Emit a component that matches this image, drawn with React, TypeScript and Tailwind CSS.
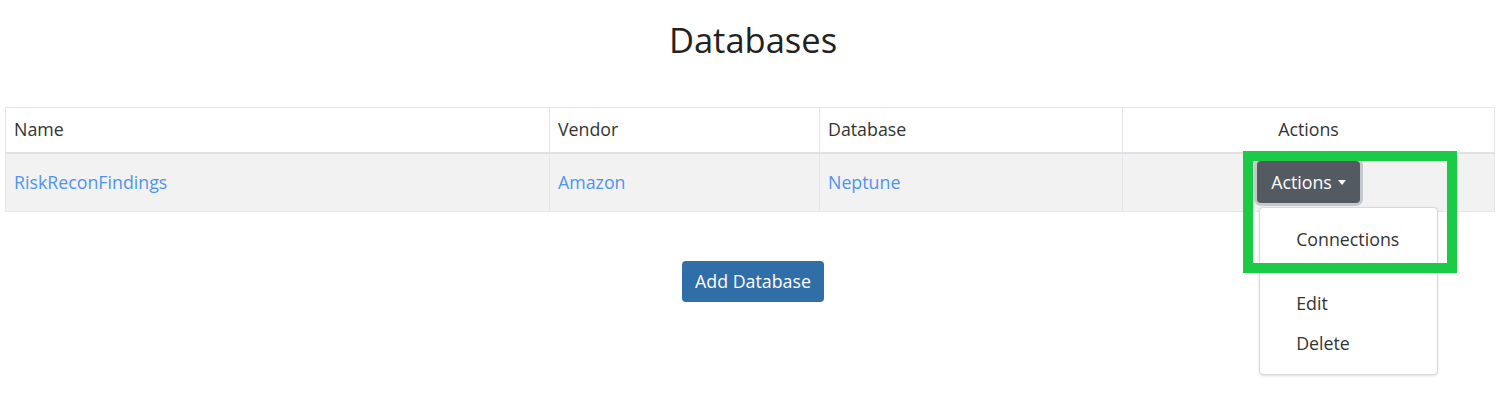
import { useState } from 'react';

const rows = [{ name: 'RiskReconFindings', vendor: 'Amazon', database: 'Neptune' }];

export default function App() {
  const [open] = useState(true);

  return (
    <div className="min-h-[412px] bg-white text-[#333] font-['Open_Sans',sans-serif]">
      <h1 className="pt-[17px] text-center text-[34.5px] leading-[46px] text-[#222]">Databases</h1>

      <div className="ml-[5px] mt-[44px] w-[1490px]">
        <table className="w-full border-collapse text-[17.8px]">
          <thead>
            <tr className="h-[45px] border-b-2 border-[#dee2e6]">
              <th className="w-[544px] border border-[#e4e6e9] px-[8px] text-left font-normal">Name</th>
              <th className="w-[270px] border border-[#e4e6e9] px-[8px] text-left font-normal">Vendor</th>
              <th className="w-[303px] border border-[#e4e6e9] px-[8px] text-left font-normal">Database</th>
              <th className="border border-[#e4e6e9] px-[8px] text-center font-normal">Actions</th>
            </tr>
          </thead>
          <tbody>
            {rows.map((r) => (
              <tr key={r.name} className="h-[59px] bg-[#f2f2f2]">
                <td className="border border-[#e4e6e9] px-[8px] text-[#4f94ef]">{r.name}</td>
                <td className="border border-[#e4e6e9] px-[8px] text-[#4f94ef]">{r.vendor}</td>
                <td className="border border-[#e4e6e9] px-[8px] text-[#4f94ef]">{r.database}</td>
                <td className="border border-[#e4e6e9] px-[8px] text-center">
                  <div className="relative inline-block align-middle">
                    <button className="flex h-[42px] items-center gap-[6px] rounded-[4px] bg-[#535a62] px-[14px] text-white shadow-[0_0_0_3px_#c5c8cc]">
                      Actions
                      <span className="h-0 w-0 border-x-[4px] border-t-[5px] border-x-transparent border-t-white" />
                    </button>
                    {open && (
                      <div className="absolute left-[2px] top-[46px] z-10 w-[179px] rounded-[4px] border border-[#d6d8db] bg-white py-[11px] text-left text-[#333] shadow-sm">
                        <div className="flex h-[40px] items-center px-[36px]">Connections</div>
                        <div className="h-[24px]" />
                        <div className="flex h-[40px] items-center px-[36px]">Edit</div>
                        <div className="flex h-[40px] items-center px-[36px]">Delete</div>
                      </div>
                    )}
                    <div className="pointer-events-none absolute left-[-14px] top-[-10px] z-20 h-[122px] w-[214px] border-[10px] border-[#1ccb45]" />
                  </div>
                </td>
              </tr>
            ))}
          </tbody>
        </table>
      </div>

      <div className="mt-[49px] flex justify-center">
        <button className="h-[41px] rounded-[4px] bg-[#2f6ea7] px-[13px] text-[17.8px] text-white">Add Database</button>
      </div>
    </div>
  );
}
